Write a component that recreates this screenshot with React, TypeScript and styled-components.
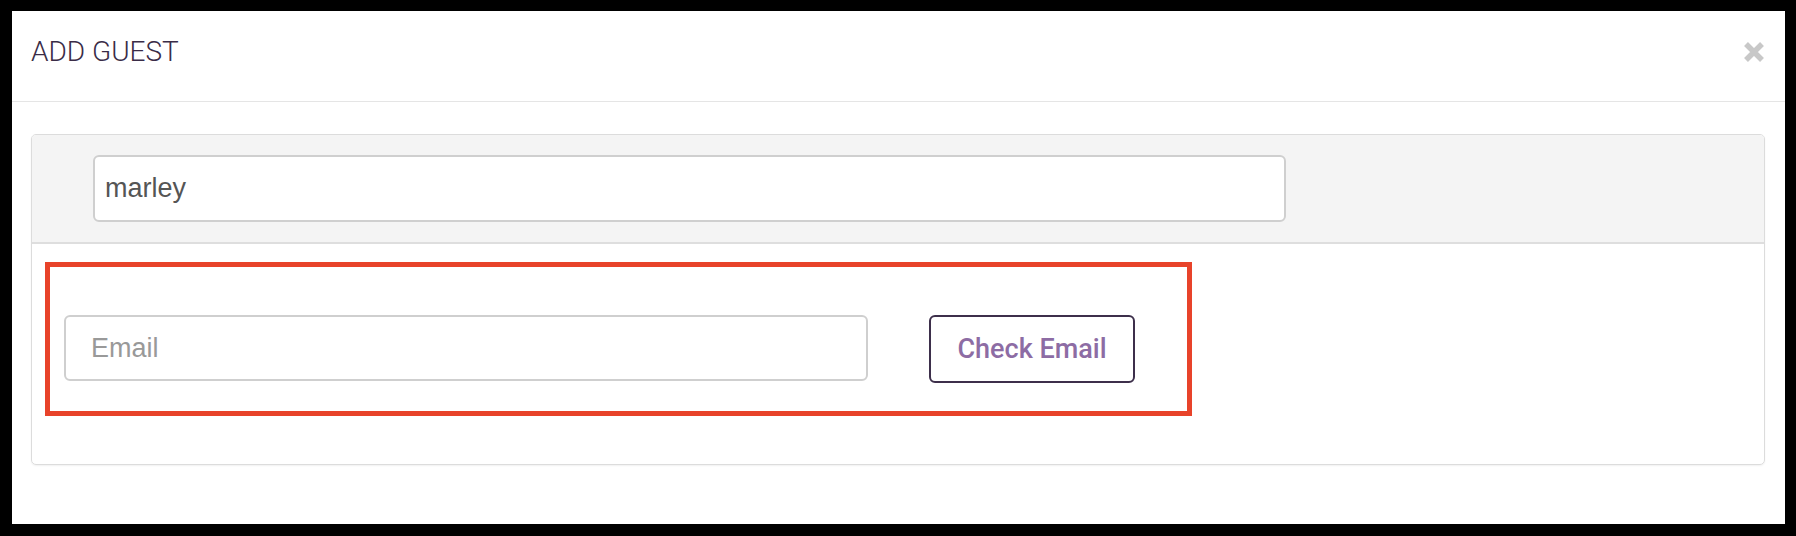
import React from 'react';
import styled, { createGlobalStyle } from 'styled-components';

const GlobalStyle = createGlobalStyle`
  html, body {
    margin: 0;
    padding: 0;
    background: #000;
  }
  body {
    width: 1796px;
    height: 536px;
    overflow: hidden;
    font-family: "Liberation Sans", Arial, sans-serif;
  }
`;

// Dark overlay behind the dialog
const Backdrop = styled.div`
  width: 1796px;
  height: 536px;
  box-sizing: border-box;
  padding: 11px 11px 12px 12px;
  background: #000;
`;

const Dialog = styled.div`
  height: 100%;
  background: #fff;
  display: flex;
  flex-direction: column;
`;

const DialogHeader = styled.div`
  height: 91px;
  flex-shrink: 0;
  box-sizing: border-box;
  padding: 0 20px 0 19px;
  display: flex;
  align-items: center;
  justify-content: space-between;
  border-bottom: 1px solid #e5e5e5;
`;

const Title = styled.h4`
  margin: 0 0 10px;
  font-family: Roboto, "Liberation Sans", sans-serif;
  font-weight: 300;
  font-size: 28px;
  color: #3a2c47;
`;

const CloseButton = styled.button`
  border: 0;
  padding: 0;
  margin: 0 0 9px 0;
  background: transparent;
  width: 22px;
  height: 22px;
  display: flex;
  cursor: pointer;
`;

const DialogBody = styled.div`
  padding: 32px 20px 0 19px;
`;

const Panel = styled.div`
  border: 1px solid #dcdcdc;
  border-radius: 5px;
  box-shadow: 0 1px 2px rgba(0, 0, 0, 0.06);
  overflow: hidden;
`;

const PanelHeading = styled.div`
  background: #f4f4f4;
  border-bottom: 2px solid #dedede;
  padding: 20px 61px 20px;
`;

const PanelContent = styled.div`
  padding: 18px 13px 48px;
`;

const TextInput = styled.input<{ $width: number; $height: number; $indent: number }>`
  display: block;
  box-sizing: border-box;
  width: ${({ $width }) => $width}px;
  height: ${({ $height }) => $height}px;
  padding: 0 ${({ $indent }) => $indent}px;
  border: 2px solid #cfcfcf;
  border-radius: 6px;
  background: #fff;
  font-family: "Liberation Sans", Arial, sans-serif;
  font-size: 27px;
  color: #555;
  outline: none;

  &::placeholder {
    color: #999;
  }
`;

// Highlighted row with the email lookup
const EmailRow = styled.div`
  width: 1147px;
  height: 154px;
  box-sizing: border-box;
  border: 5px solid #e8432a;
  padding: 48px 14px 0;
  display: flex;
  align-items: flex-start;
  gap: 61px;
`;

const OutlineButton = styled.button`
  width: 206px;
  height: 68px;
  box-sizing: border-box;
  border: 2px solid #3d2f4b;
  border-radius: 6px;
  background: #fff;
  font-family: Roboto, "Liberation Sans", sans-serif;
  font-weight: 500;
  font-size: 27px;
  color: #8d6ca4;
  cursor: pointer;
  padding: 0;
`;

const CloseIcon = () => (
  <svg width="22" height="22" viewBox="0 0 22 22">
    <path d="M3 3 L19 19 M19 3 L3 19" stroke="#c8c8c8" strokeWidth="5.5" strokeLinecap="butt" />
  </svg>
);

export default function App() {
  return (
    <>
      <GlobalStyle />
      <Backdrop>
        <Dialog>
          <DialogHeader>
            <Title>ADD GUEST</Title>
            <CloseButton aria-label="Close">
              <CloseIcon />
            </CloseButton>
          </DialogHeader>
          <DialogBody>
            <Panel>
              <PanelHeading>
                <TextInput $width={1193} $height={67} $indent={10} value="marley" readOnly />
              </PanelHeading>
              <PanelContent>
                <EmailRow>
                  <TextInput $width={804} $height={66} $indent={25} placeholder="Email" />
                  <OutlineButton>Check Email</OutlineButton>
                </EmailRow>
              </PanelContent>
            </Panel>
          </DialogBody>
        </Dialog>
      </Backdrop>
    </>
  );
}
